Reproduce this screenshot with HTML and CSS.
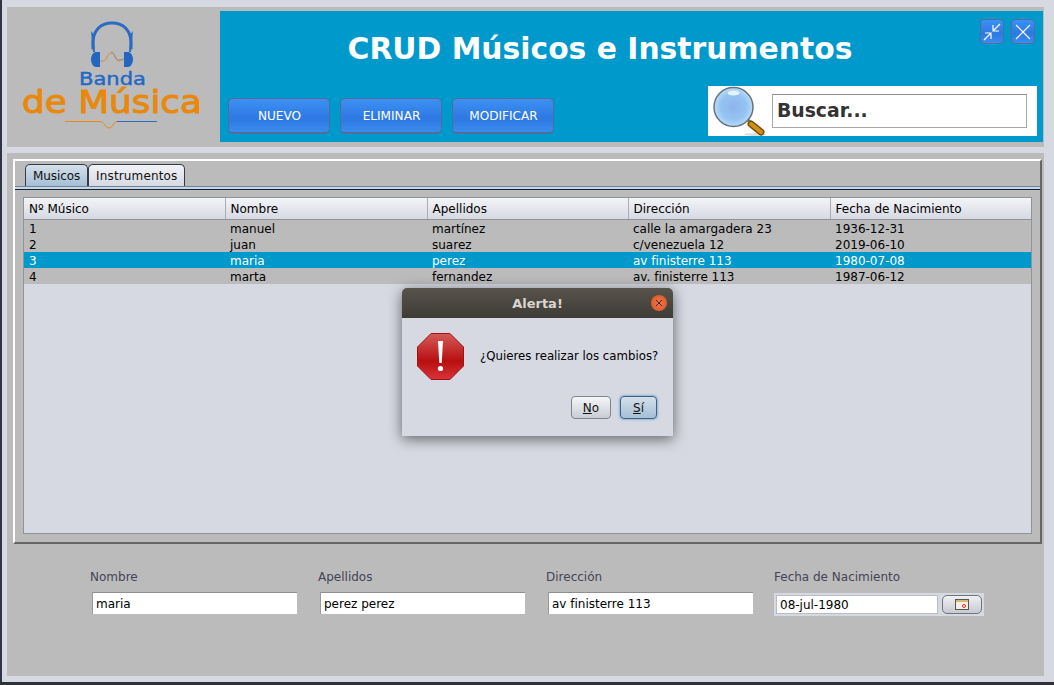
FILE: index.html
```html
<!DOCTYPE html>
<html lang="es">
<head>
    <meta charset="UTF-8">
    <title>CRUD Músicos e Instrumentos</title>
    <link rel="stylesheet" href="styles.css">
</head>
<body>
<div class="window">
    <header class="top-panel">
        <div class="logo">
            <svg width="195" height="120" viewBox="0 0 195 120">
                <path d="M78 34 C76 14 87 8 97 8 C107 8 118 14 116 34" fill="none" stroke="#2a6cc4" stroke-width="3"/>
                <path d="M76 16 L78 37 L80 37 L79 20 Z M118 16 L116 37 L114 37 L115 20 Z" fill="#2a6cc4"/>
                <path d="M81 37 h4 v15 h-4 a5 7.500 0 0 1 0 -15 Z M113 37 h-4 v15 h4 a5 7.500 0 0 0 0 -15 Z" fill="#2266c0"/>
                <path d="M85 46 H88 C92 46 92 38 96 38 C100 38 100 46 104 46 C106 46 106 44 108 45" fill="none" stroke="#d98a2e" stroke-width="1"/>
                <path d="M96 37 C100 37 100 45 104 45 L109 44" fill="none" stroke="#8b8f96" stroke-width="1"/>
                <text class="logo-banda" x="64" y="70" textLength="67" lengthAdjust="spacingAndGlyphs">Banda</text>
                <text class="logo-musica" x="7" y="98" textLength="180" lengthAdjust="spacingAndGlyphs">de Música</text>
                <path d="M50 106.500 H84 C90 106.500 90 113 94 113 C98 113 98 106.500 102 106.500" fill="none" stroke="#e8880c" stroke-width="1"/>
                <path d="M102 106.500 H142" fill="none" stroke="#2a6cc4" stroke-width="1"/>
            </svg>
        </div>
        <div class="banner">
            <h1>CRUD Músicos e Instrumentos</h1>
            <div class="win-buttons">
                <button class="win-button">
                    <svg width="20" height="20" viewBox="0 0 20 20" fill="none" stroke="#fff" stroke-width="1.200"><path d="M18 2 L11 9 M11 3 V9 H17 M2 18 L9 11 M3 11 H9 V17"/></svg>
                </button>
                <button class="win-button">
                    <svg width="20" height="20" viewBox="0 0 20 20" fill="none" stroke="#fff" stroke-width="1.200"><path d="M3 3 L17 17 M17 3 L3 17"/></svg>
                </button>
            </div>
            <div class="banner-bottom">
                <div class="actions">
                    <button class="action">NUEVO</button>
                    <button class="action">ELIMINAR</button>
                    <button class="action">MODIFICAR</button>
                </div>
                <div class="search">
                    <svg width="54" height="50" viewBox="0 0 54 50">
                        <defs>
                            <radialGradient id="lens" cx="50%" cy="50%" r="55%">
                                <stop offset="0" stop-color="#8fb4ea"/>
                                <stop offset="0.6" stop-color="#93c4f3"/>
                                <stop offset="1" stop-color="#c5e2f8"/>
                            </radialGradient>
                        </defs>
                        <ellipse cx="42" cy="48.500" rx="11" ry="1.500" fill="#ddd"/>
                        <path d="M34 33 L38 37" stroke="#66737f" stroke-width="3"/>
                        <path d="M38 38 L48 46" stroke="#7a5208" stroke-width="7" stroke-linecap="round"/>
                        <path d="M38 38 L48 46" stroke="#d28f1c" stroke-width="4" stroke-linecap="round"/>
                        <circle cx="20.500" cy="21" r="19.500" fill="url(#lens)" stroke="#66737f" stroke-width="1.500"/>
                        <ellipse cx="20.500" cy="7" rx="6" ry="2.500" fill="#e6f3fc"/>
                    </svg>
                    <input class="search-input" type="text" value="Buscar...">
                </div>
            </div>
        </div>
    </header>

    <main class="bottom-panel">
        <section class="tab-panel">
            <div class="tabs">
                <span class="tab active">Musicos</span>
                <span class="tab">Instrumentos</span>
            </div>
            <div class="table-wrap">
                <table>
                    <colgroup>
                        <col class="col-a"><col class="col-b"><col class="col-a"><col class="col-b"><col class="col-a">
                    </colgroup>
                    <thead>
                        <tr><th>Nº Músico</th><th>Nombre</th><th>Apellidos</th><th>Dirección</th><th>Fecha de Nacimiento</th></tr>
                    </thead>
                    <tbody>
                        <tr><td>1</td><td>manuel</td><td>martínez</td><td>calle la amargadera 23</td><td>1936-12-31</td></tr>
                        <tr><td>2</td><td>juan</td><td>suarez</td><td>c/venezuela 12</td><td>2019-06-10</td></tr>
                        <tr class="selected"><td>3</td><td>maria</td><td>perez</td><td>av finisterre 113</td><td>1980-07-08</td></tr>
                        <tr><td>4</td><td>marta</td><td>fernandez</td><td>av. finisterre 113</td><td>1987-06-12</td></tr>
                    </tbody>
                </table>
            </div>
        </section>

        <form class="edit-form">
            <label class="field">Nombre<input type="text" value="maria"></label>
            <label class="field">Apellidos<input type="text" value="perez perez"></label>
            <label class="field">Dirección<input type="text" value="av finisterre 113"></label>
            <div class="field date-field">Fecha de Nacimiento
                <div class="date-picker">
                    <input type="text" value="08-jul-1980">
                    <button type="button" class="date-button">
                        <svg width="14" height="11" viewBox="0 0 14 11"><rect x="0.500" y="0.500" width="13" height="10" fill="#f4eee0" stroke="#555"/><rect x="1" y="1" width="12" height="2" fill="#d8b878"/><circle cx="9" cy="7" r="1.500" fill="none" stroke="#d33"/></svg>
                    </button>
                </div>
            </div>
        </form>
    </main>
</div>

<div class="dialog">
    <div class="dialog-title">
        <span>Alerta!</span>
        <span class="dialog-close">
            <svg width="8" height="8" viewBox="0 0 8 8" fill="none" stroke="#4a2412" stroke-width="1"><path d="M1 1 L7 7 M7 1 L1 7"/></svg>
        </span>
    </div>
    <div class="dialog-body">
        <svg width="47" height="47" viewBox="0 0 47 47">
            <defs>
                <linearGradient id="stop" x1="0" y1="0" x2="0" y2="1">
                    <stop offset="0" stop-color="#d45a5a"/>
                    <stop offset="0.6" stop-color="#b80f0f"/>
                    <stop offset="1" stop-color="#d8343a"/>
                </linearGradient>
            </defs>
            <path d="M14 0.500 H33 L46.500 14 V33 L33 46.500 H14 L0.500 33 V14 Z" fill="url(#stop)" stroke="#9c1414"/>
            <path d="M21 8 H26 L24.700 30 H22.300 Z" fill="#fff"/>
            <circle cx="23.500" cy="35.500" r="2.600" fill="#fff"/>
        </svg>
        <p>¿Quieres realizar los cambios?</p>
    </div>
    <div class="dialog-buttons">
        <button class="dialog-button"><u>N</u>o</button>
        <button class="dialog-button default"><u>S</u>í</button>
    </div>
</div>
</body>
</html>
```

FILE: styles.css
```css
html, body {
    margin: 0;
    height: 685px;
    overflow: hidden;
}
body {
    background: #d6d9e2;
    font-family: "DejaVu Sans", sans-serif;
    font-size: 12px;
    color: #000;
    border-left: 2px solid #2f3542;
    border-bottom: 3px solid #2f3136;
    box-sizing: border-box;
}
button, input {
    font-family: inherit;
    font-size: inherit;
}
.window {
    padding: 7px 10px 0 5px;
}

/* cabecera */
.top-panel {
    display: flex;
    height: 140px;
    background: #bbbbbb;
    padding: 4px 1px 5px 0;
    box-sizing: border-box;
}
.logo {
    width: 213px;
    flex: none;
    padding: 4px 0 0 8px;
    box-sizing: border-box;
}
.logo svg {
    display: block;
}
.logo-banda {
    font-family: "DejaVu Sans", sans-serif;
    font-size: 18px;
    fill: #2268c4;
    stroke: #2268c4;
    stroke-width: 0.400px;
}
.logo-musica {
    font-family: "DejaVu Sans", sans-serif;
    font-size: 32px;
    fill: #e8880c;
    stroke: #e8880c;
    stroke-width: 1px;
}
.banner {
    flex: 1;
    background: #0099cc;
    position: relative;
    display: flex;
    flex-direction: column;
    justify-content: space-between;
}
.banner h1 {
    margin: 0;
    padding: 19px 63px 0 0;
    text-align: center;
    font-size: 29.800px;
    line-height: 37px;
    font-weight: bold;
    color: #fff;
}
.win-buttons {
    position: absolute;
    top: 8px;
    right: 8px;
    display: flex;
    gap: 7px;
}
.win-button {
    width: 24px;
    height: 25px;
    padding: 0;
    display: flex;
    align-items: center;
    justify-content: center;
    border: 1px solid #4f6f96;
    border-radius: 4px;
    background: linear-gradient(#3d90f4, #2d78e2 60%, #3a8cf0);
}
.banner-bottom {
    display: flex;
    justify-content: space-between;
    align-items: flex-end;
    padding: 0 6px 6px 8px;
}
.actions {
    display: flex;
    gap: 10px;
    padding-bottom: 2px;
}
.action {
    width: 102px;
    height: 36px;
    color: #fff;
    border: 1px solid #4f6f96;
    border-bottom-width: 2px;
    border-radius: 5px;
    background: linear-gradient(#3d90f4, #2d78e2 60%, #3a8cf0);
    padding: 1px 0 0 1px;
    font-size: 12.100px;
}
.search {
    width: 329px;
    height: 50px;
    background: #fff;
    display: flex;
    align-items: center;
    gap: 5px;
    padding-left: 5px;
    box-sizing: border-box;
}
.search-input {
    width: 255px;
    height: 34px;
    box-sizing: border-box;
    border: 1px solid #aaa;
    border-top: 1px solid #8c8c8c;
    outline: none;
    padding: 0 4px 2px 4px;
    font-size: 18.800px;
    font-weight: bold;
    color: #333;
}

/* panel inferior */
.bottom-panel {
    margin-top: 6px;
    height: 523px;
    background: #bbbbbb;
    padding: 6px 2px 0 6px;
    box-sizing: border-box;
}
.tab-panel {
    height: 385px;
    box-sizing: border-box;
    border: 2px solid;
    border-color: #fff #666 #666 #fff;
    padding-top: 3px;
}
.tabs {
    display: flex;
    height: 22px;
    padding-left: 10px;
    border-bottom: 1px solid #6f8294;
    box-shadow: 0 2px 0 #c6d6e6, 0 3px 0 #10253a;
    margin-bottom: 10px;
}
.tab {
    height: 22px;
    line-height: 22px;
    padding: 0 7px;
    box-sizing: border-box;
    border: 1px solid #333d4a;
    border-bottom: none;
    border-radius: 5px 5px 0 0;
    background: linear-gradient(#f2f3f7, #d6d9e2);
    color: #111;
    letter-spacing: 0.150px;
}
.tab.active {
    background: linear-gradient(#d5dfe9, #a5bfd6);
    letter-spacing: -0.100px;
}
.table-wrap {
    margin: 0 8px;
    height: 337px;
    box-sizing: border-box;
    border: 1px solid #8f9299;
    background: #d6d9e2;
}
table {
    width: 1007px;
    border-collapse: collapse;
    table-layout: fixed;
}
.col-a {
    width: 201px;
}
.col-b {
    width: 202px;
}
th {
    height: 21px;
    padding: 0 5px;
    text-align: left;
    font-weight: normal;
    background: linear-gradient(#f3f4f7, #d6d9e2);
    border-right: 1px solid #a9adb5;
    border-bottom: 1px solid #8f9299;
}
th:last-child {
    border-right: none;
}
td {
    height: 16px;
    padding: 2px 5px 0;
    box-sizing: border-box;
    background: #bbbbbb;
    line-height: 14px;
}
.selected td {
    background: #0099cc;
    color: #fff;
}

/* formulario */
.edit-form {
    display: flex;
    padding: 26px 0 0 77px;
}
.field {
    display: flex;
    flex-direction: column;
    width: 228px;
    color: #445;
    line-height: 15px;
}
.field input {
    margin: 7px 0 0 2px;
    width: 205px;
    height: 22px;
    box-sizing: border-box;
    border: none;
    border-top: 1px solid #8f8f8f;
    border-left: 1px solid #9a9a9a;
    padding: 0 3px;
    outline: none;
    color: #000;
}
.date-picker {
    width: 210px;
    height: 23px;
    margin-top: 8px;
    background: #d6d9e2;
    display: flex;
    align-items: center;
    gap: 4px;
    padding-left: 2px;
    box-sizing: border-box;
}
.date-field input {
    margin: 0;
    width: 162px;
    height: 19px;
    border: 1px solid #b8bcc6;
    padding-top: 1px;
}
.date-button {
    width: 40px;
    height: 19px;
    padding: 0;
    display: flex;
    align-items: center;
    justify-content: center;
    border: 1px solid #70757d;
    border-radius: 5px;
    background: linear-gradient(#f0f1f4, #c6c9d0);
}

/* dialogo */
.dialog {
    position: absolute;
    left: 402px;
    top: 288px;
    width: 271px;
    height: 148px;
    background: #d6d9e2;
    border-radius: 5px 5px 0 0;
    box-shadow: 0 3px 14px rgba(0, 0, 0, 0.55);
}
.dialog-title {
    height: 30px;
    background: linear-gradient(#58544c, #3e3b36);
    border-radius: 5px 5px 0 0;
    display: flex;
    align-items: center;
    justify-content: center;
    font-size: 13px;
    font-weight: bold;
    color: #d8d6ce;
    position: relative;
}
.dialog-close {
    position: absolute;
    right: 6px;
    top: 7px;
    width: 16px;
    height: 16px;
    border-radius: 50%;
    background: radial-gradient(#ee7a4c, #d9501e);
    display: flex;
    align-items: center;
    justify-content: center;
}
.dialog-body {
    display: flex;
    align-items: center;
    padding: 15px 0 0 15px;
}
.dialog-body p {
    margin: -2px 0 0 16px;
    font-size: 11.750px;
}
.dialog-buttons {
    display: flex;
    justify-content: flex-end;
    gap: 9px;
    padding: 16px 16px 0 0;
}
.dialog-button {
    width: 40px;
    height: 23px;
    padding: 0;
    border: 1px solid #80858d;
    border-radius: 4px;
    background: linear-gradient(#f5f6f8, #c9ccd4);
    color: #111;
}
.dialog-button.default {
    width: 37px;
    border-color: #3f6184;
    box-shadow: 0 0 2px 1px #8fb3d6;
    background: linear-gradient(#d4dfea, #a5bfd6);
}
```
